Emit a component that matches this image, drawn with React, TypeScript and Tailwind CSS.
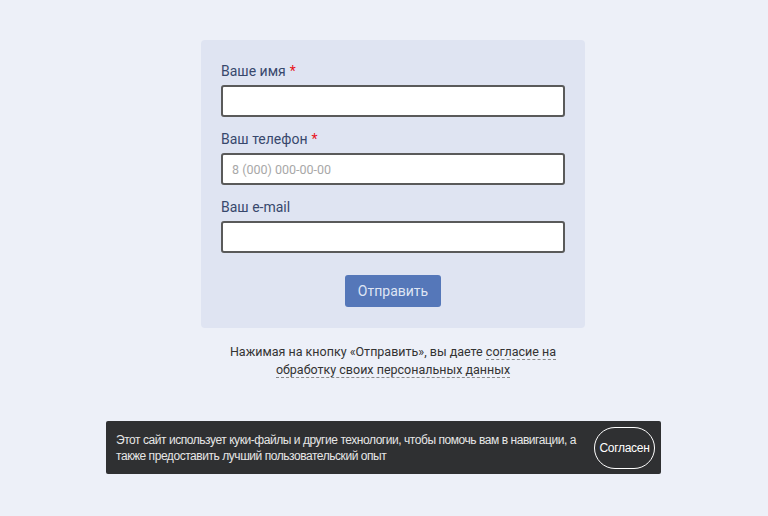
import React from 'react';

const Field: React.FC<{ label: string; required?: boolean; placeholder?: string; type?: string }> = ({ label, required, placeholder, type = 'text' }) => (
  <label className="flex flex-col">
    <span className="text-[14px] leading-[22px] text-[#38486d] mb-[3px]">
      {label}
      {required && <span className="text-[#e8141c] ml-[4px]">*</span>}
    </span>
    <input
      type={type}
      placeholder={placeholder}
      className="h-[32px] w-full bg-white border-2 border-[#5a5a5a] rounded-[3px] px-[9px] text-[12.5px] text-[#333] placeholder:text-[#a8a8a8] outline-none"
    />
  </label>
);

export default function App() {
  return (
    <div className="min-h-[516px] bg-[#edf0f8] pl-[18px] pt-[40px] relative" style={{ fontFamily: 'Roboto, "Noto Sans", sans-serif' }}>
      <div className="flex flex-col items-center">
        <form className="w-[384px] bg-[#dfe4f2] rounded-[4px] pt-[20px] pb-[21px] px-[20px] flex flex-col" onSubmit={(e) => e.preventDefault()}>
          <div className="flex flex-col gap-[11px]">
            <Field label="Ваше имя" required />
            <Field label="Ваш телефон" required placeholder="8 (000) 000-00-00" type="tel" />
            <Field label="Ваш e-mail" type="email" />
          </div>
          <div className="flex justify-center mt-[22px]">
            <button type="submit" className="w-[96px] h-[32px] rounded-[3px] bg-[#5577b9] text-[#dfe5f4] text-[14px]">
              Отправить
            </button>
          </div>
        </form>
        <p className="mt-[15px] text-center text-[12.5px] leading-[18px] text-[#333]">
          Нажимая на кнопку «Отправить», вы даете{' '}
          <a className="border-b border-dashed border-[#888]">согласие на</a>
          <br />
          <a className="border-b border-dashed border-[#888]">обработку своих персональных данных</a>
        </p>
      </div>

      <div
        className="absolute left-[106px] top-[421px] w-[555px] h-[53px] bg-[#2f3032] rounded-[2px] flex items-center justify-between pl-[10px] pr-[6px]"
        style={{ fontFamily: '"Liberation Sans", Arial, sans-serif' }}
      >
        <p className="text-[12px] leading-[16px] tracking-[-0.45px] text-[#e6e6e6] w-[470px]">
          Этот сайт использует куки-файлы и другие технологии, чтобы помочь вам в навигации, а также предоставить лучший пользовательский опыт
        </p>
        <button className="w-[61px] h-[42px] rounded-full border-[1.5px] border-white text-[12px] tracking-[-0.3px] text-white">
          Согласен
        </button>
      </div>
    </div>
  );
}
